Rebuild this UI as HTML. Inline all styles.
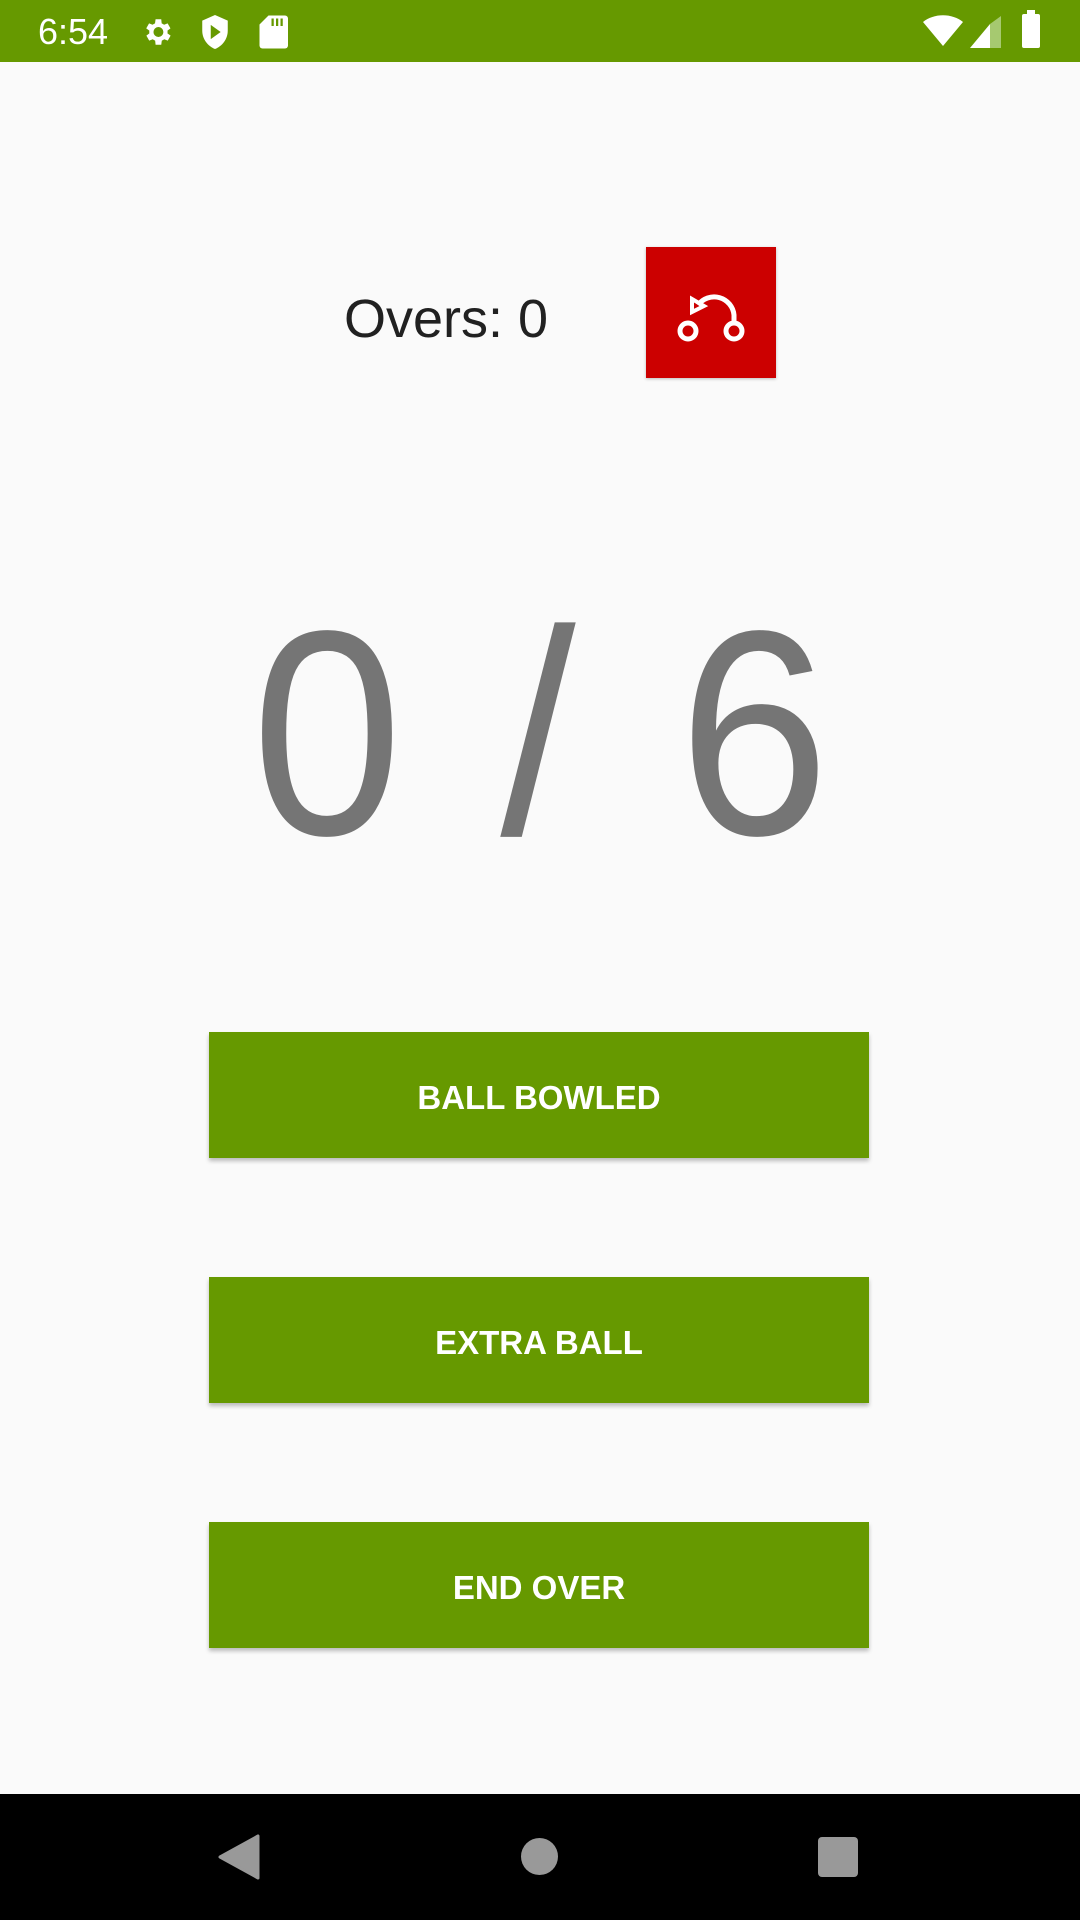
<!DOCTYPE html>
<html><head><meta charset="utf-8"><style>
*{margin:0;padding:0;box-sizing:border-box}
body{width:1080px;height:1920px;background:#fafafa;position:relative;overflow:hidden;font-family:"Liberation Sans",sans-serif}
.sb{position:absolute;left:0;top:0;width:1080px;height:62px;background:#669900;color:#fff}
.btn{position:absolute;left:209px;width:660px;height:126px;background:#669900;color:#fff;font-size:33px;font-weight:bold;display:flex;align-items:center;justify-content:center;padding-top:5px;box-shadow:0 3px 4px rgba(0,0,0,.25)}
.nav{position:absolute;left:0;top:1794px;width:1080px;height:126px;background:#000}
.big{position:absolute;top:583px;width:200px;margin-left:-100px;text-align:center;font-size:292px;line-height:300px;color:#757575;transform:scaleX(0.93)}
</style></head><body>
<div class="sb">
<div style="position:absolute;left:38px;top:11px;font-size:36px;">6:54</div>
<svg style="position:absolute;left:140px;top:15px" width="34" height="34" viewBox="0 0 24 24"><path fill="#fff" d="M19.4 13a7.5 7.5 0 000-2l2.1-1.6-2-3.5-2.5 1a7 7 0 00-1.7-1L15 3h-4l-.4 2.9a7 7 0 00-1.7 1l-2.5-1-2 3.5L6.6 11a7.5 7.5 0 000 2l-2.1 1.6 2 3.5 2.5-1a7 7 0 001.7 1L11 21h4l.4-2.9a7 7 0 001.7-1l2.5 1 2-3.5zM13 15.5a3.5 3.5 0 110-7 3.5 3.5 0 010 7z"/></svg>
<svg style="position:absolute;left:198px;top:13px" width="34" height="38" viewBox="0 0 24 26"><path fill="#fff" d="M12 1L3 5v7c0 6 4 11 9 13 5-2 9-7 9-13V5z"/><path fill="#669900" d="M9 8l7 5-7 5z"/></svg>
<svg style="position:absolute;left:258px;top:14px" width="30" height="36" viewBox="0 0 20 24"><path fill="#fff" d="M7 1h11a2 2 0 012 2v18a2 2 0 01-2 2H3a2 2 0 01-2-2V7z"/><path fill="#669900" d="M9 3h1.5v5H9zM12 3h1.5v5H12zM15 3h1.5v5H15z"/></svg>
<svg style="position:absolute;left:922px;top:15px" width="42" height="32" viewBox="0 0 42 32"><path fill="#fff" d="M1 7C12-2 30-2 41 7L21 31z"/></svg>
<svg style="position:absolute;left:970px;top:16px" width="32" height="32" viewBox="0 0 32 32"><path fill="#fff" d="M0 32L20 8V32z"/><path fill="#a6c970" d="M20 8L31 0V32H20z"/></svg>
<div style="position:absolute;left:1022px;top:14px;width:18px;height:34px;background:#fff;border-radius:2px"></div>
<div style="position:absolute;left:1027px;top:10px;width:8px;height:5px;background:#fff"></div>
</div>
<div style="position:absolute;left:344px;top:288px;font-size:54px;color:#212121;">Overs: 0</div>
<div style="position:absolute;left:646px;top:247px;width:130px;height:131px;background:#cc0000;box-shadow:0 1px 3px rgba(0,0,0,.25)">
<svg width="130" height="131" viewBox="0 0 130 131"><g fill="none" stroke="#fff" stroke-width="5"><circle cx="42" cy="84" r="8"/><circle cx="88" cy="84" r="8"/><path d="M88 76V68A20 20 0 0 0 52 58"/><path d="M46 52l12 7-12 6z" stroke-width="4"/></g></svg>
</div>
<div class="big" style="left:327px">0</div>
<div class="big" style="left:538px">/</div>
<div class="big" style="left:754px">6</div>
<div class="btn" style="top:1032px">BALL BOWLED</div>
<div class="btn" style="top:1277px">EXTRA BALL</div>
<div class="btn" style="top:1522px">END OVER</div>
<div class="nav">
<svg style="position:absolute;left:218px;top:40px" width="42" height="46" viewBox="0 0 42 46"><path fill="#999" d="M40 2V44L2 23z" stroke="#999" stroke-width="3" stroke-linejoin="round"/></svg>
<div style="position:absolute;left:521px;top:44px;width:37px;height:37px;border-radius:50%;background:#999"></div>
<div style="position:absolute;left:818px;top:43px;width:40px;height:40px;border-radius:4px;background:#999"></div>
</div>
</body></html>
